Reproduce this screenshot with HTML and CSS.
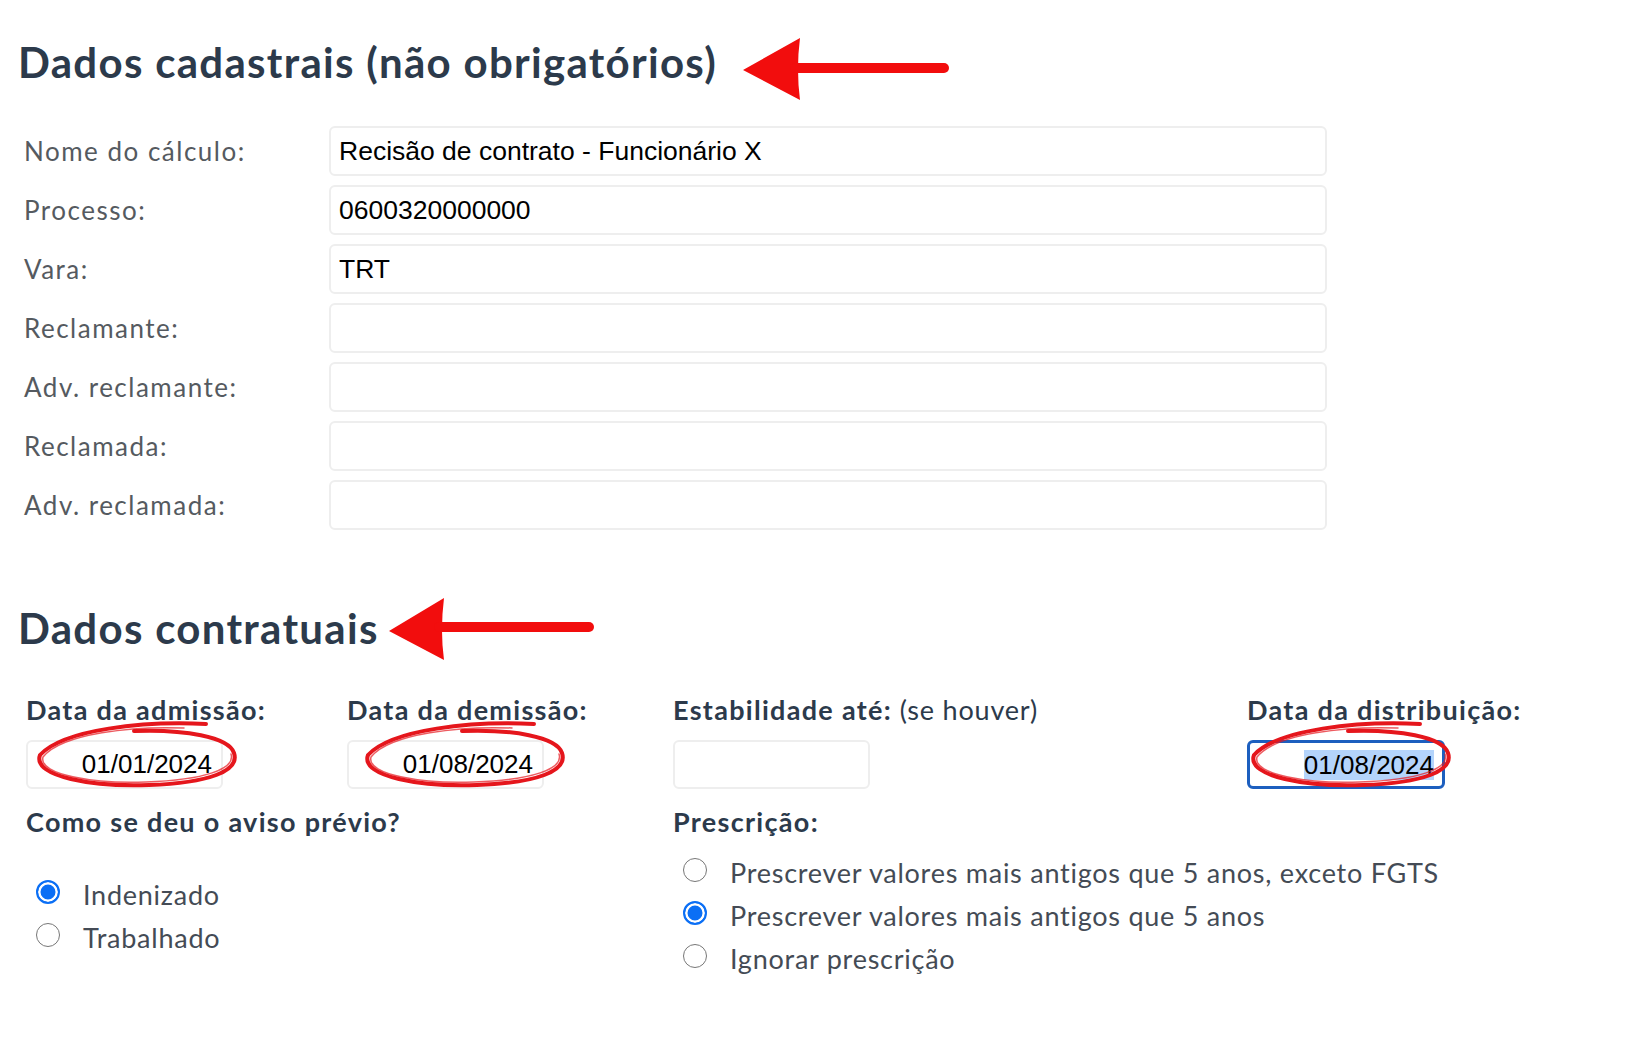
FILE: index.html
```html
<!DOCTYPE html>
<html lang="pt-BR">
<head>
<meta charset="utf-8">
<title>Dados do cálculo</title>
<link rel="stylesheet" href="styles.css">
</head>
<body>
<main class="page">
  <section class="block">
    <div class="title-row">
      <h2 class="title">Dados cadastrais (não obrigatórios)</h2>
      <svg class="arrow arrow--one" width="210" height="64" viewBox="0 0 210 64" aria-hidden="true">
        <path d="M0 33 L57 1 Q53 32 57 63 Z" fill="#f20d0d"/>
        <path d="M52 31 L201 31" stroke="#f20d0d" stroke-width="10" stroke-linecap="round" fill="none"/>
      </svg>
    </div>
    <div class="fields">
      <label class="field-label" for="f-nome">Nome do cálculo:</label>
      <input class="text-input" id="f-nome" type="text" value="Recisão de contrato - Funcionário X">
      <label class="field-label" for="f-processo">Processo:</label>
      <input class="text-input" id="f-processo" type="text" value="0600320000000">
      <label class="field-label" for="f-vara">Vara:</label>
      <input class="text-input" id="f-vara" type="text" value="TRT">
      <label class="field-label" for="f-reclamante">Reclamante:</label>
      <input class="text-input" id="f-reclamante" type="text" value="">
      <label class="field-label" for="f-adv-reclamante">Adv. reclamante:</label>
      <input class="text-input" id="f-adv-reclamante" type="text" value="">
      <label class="field-label" for="f-reclamada">Reclamada:</label>
      <input class="text-input" id="f-reclamada" type="text" value="">
      <label class="field-label" for="f-adv-reclamada">Adv. reclamada:</label>
      <input class="text-input" id="f-adv-reclamada" type="text" value="">
    </div>
  </section>

  <section class="block block--contract">
    <div class="title-row">
      <h2 class="title">Dados contratuais</h2>
      <svg class="arrow arrow--two" width="210" height="64" viewBox="0 0 210 64" aria-hidden="true">
        <path d="M0 33 L55 0 Q51 32 55 62 Z" fill="#f20d0d"/>
        <path d="M50 29 L200 29" stroke="#f20d0d" stroke-width="10" stroke-linecap="round" fill="none"/>
      </svg>
    </div>

    <div class="contract">
      <div class="date-field">
        <label class="strong-label" for="d-admissao">Data da admissão:</label>
        <input class="date-input" id="d-admissao" type="text" value="01/01/2024">
        <svg class="mark mark--one" width="212" height="72" viewBox="0 0 212 72" aria-hidden="true">
          <path class="mark-main" d="M172 5 C110 2 30 10 6 36 C-2 58 60 68 115 66 C175 64 206 52 200 34 C195 18 150 10 100 12"/>
          <path class="mark-thin" d="M150 9 C100 7 28 14 9 38 C4 56 62 65 112 63 C170 61 202 50 197 35"/>
        </svg>
      </div>
      <div class="date-field">
        <label class="strong-label" for="d-demissao">Data da demissão:</label>
        <input class="date-input" id="d-demissao" type="text" value="01/08/2024">
        <svg class="mark mark--two" width="212" height="72" viewBox="0 0 212 72" aria-hidden="true">
          <path class="mark-main" d="M172 5 C110 2 30 10 6 36 C-2 58 60 68 115 66 C175 64 206 52 200 34 C195 18 150 10 100 12"/>
          <path class="mark-thin" d="M150 9 C100 7 28 14 9 38 C4 56 62 65 112 63 C170 61 202 50 197 35"/>
        </svg>
      </div>
      <div class="date-field">
        <label class="strong-label" for="d-estabilidade">Estabilidade até: <span class="hint">(se houver)</span></label>
        <input class="date-input" id="d-estabilidade" type="text" value="">
      </div>
      <div class="date-field">
        <span class="strong-label">Data da distribuição:</span>
        <div class="date-input date-input--focused" role="textbox"><span class="selected-text">01/08/2024</span></div>
        <svg class="mark mark--three" width="212" height="72" viewBox="0 0 212 72" aria-hidden="true">
          <path class="mark-main" d="M172 5 C110 2 30 10 6 36 C-2 58 60 68 115 66 C175 64 206 52 200 34 C195 18 150 10 100 12"/>
          <path class="mark-thin" d="M150 9 C100 7 28 14 9 38 C4 56 62 65 112 63 C170 61 202 50 197 35"/>
        </svg>
      </div>

      <div class="choice choice--wide">
        <span class="strong-label">Como se deu o aviso prévio?</span>
        <div class="options options--spaced">
          <label class="option"><input class="radio" type="radio" name="aviso" checked><span>Indenizado</span></label>
          <label class="option"><input class="radio" type="radio" name="aviso"><span>Trabalhado</span></label>
        </div>
      </div>
      <div class="choice choice--wide">
        <span class="strong-label">Prescrição:</span>
        <div class="options">
          <label class="option"><input class="radio" type="radio" name="prescricao"><span>Prescrever valores mais antigos que 5 anos, exceto FGTS</span></label>
          <label class="option"><input class="radio" type="radio" name="prescricao" checked><span>Prescrever valores mais antigos que 5 anos</span></label>
          <label class="option"><input class="radio" type="radio" name="prescricao"><span>Ignorar prescrição</span></label>
        </div>
      </div>
    </div>
  </section>
</main>
</body>
</html>
```

FILE: styles.css
```css
html, body {
  margin: 0;
  background: #ffffff;
}

body {
  font-family: Lato, "Open Sans", sans-serif;
  color: #2c3a4b;
}

.page {
  padding: 38px 0 0 16px;
}

.title-row {
  display: flex;
  align-items: flex-start;
}

.title {
  margin: 0 0 0 2px;
  font-size: 42px;
  line-height: 48px;
  font-weight: 700;
  color: #2c3a4b;
  letter-spacing: 1.3px;
  white-space: nowrap;
}

.arrow {
  flex: none;
  display: block;
}

.arrow--one {
  margin: -1px 0 0 26px;
}

.arrow--two {
  margin: -6px 0 0 10px;
}

.fields {
  display: grid;
  grid-template-columns: 305px 998px;
  row-gap: 9px;
  align-items: center;
  margin: 25px 0 0 8px;
}

.field-label {
  font-size: 26px;
  line-height: 30px;
  color: #555a60;
  letter-spacing: 1.5px;
}

.text-input {
  display: block;
  width: 100%;
  height: 50px;
  box-sizing: border-box;
  margin: 0;
  padding: 0 8px;
  border: 2px solid #eeeeee;
  border-radius: 6px;
  background: #ffffff;
  font-family: "Liberation Sans", Arial, sans-serif;
  font-size: 26.5px;
  color: #000000;
  outline: none;
}

.block--contract .title-row {
  margin-top: 74px;
}

.contract {
  display: grid;
  grid-template-columns: 321px 326px 574px 220px;
  row-gap: 18px;
  margin: 33px 0 0 10px;
}

.date-field {
  position: relative;
  display: flex;
  flex-direction: column;
  align-items: flex-start;
  gap: 15px;
}

.strong-label {
  font-size: 27px;
  line-height: 30px;
  font-weight: 700;
  color: #2c3a4b;
  letter-spacing: 1.3px;
  white-space: nowrap;
}

.hint {
  font-weight: 400;
  letter-spacing: 0.8px;
}

.date-input {
  display: block;
  width: 197px;
  height: 49px;
  box-sizing: border-box;
  margin: 0;
  padding: 0 9px;
  border: 2px solid #eeeeee;
  border-radius: 6px;
  background: #ffffff;
  font-family: "Liberation Sans", Arial, sans-serif;
  font-size: 26px;
  color: #000000;
  text-align: right;
  outline: none;
}

.date-input--focused {
  width: 198px;
  display: flex;
  align-items: center;
  justify-content: flex-end;
  padding: 0 8px;
  border: 3px solid #1d5fbf;
  border-radius: 6px;
}

.selected-text {
  background: #b4d4fb;
  line-height: 30px;
}

.mark {
  position: absolute;
  top: 24px;
  pointer-events: none;
  overflow: visible;
}

.mark--one {
  left: 8px;
}

.mark--two {
  left: 15px;
}

.mark--three {
  left: 1px;
}

.mark-main {
  fill: none;
  stroke: #e5161c;
  stroke-width: 4;
  stroke-linecap: round;
}

.mark-thin {
  fill: none;
  stroke: #e5161c;
  stroke-width: 1.5;
  stroke-linecap: round;
  opacity: 0.7;
}

.choice--wide {
  grid-column: span 2;
  display: flex;
  flex-direction: column;
  align-items: flex-start;
}

.options {
  display: flex;
  flex-direction: column;
  margin-top: 14px;
}

.options--spaced {
  margin-top: 36px;
}

.option {
  display: flex;
  align-items: center;
  gap: 23px;
  height: 43px;
  padding-left: 10px;
  font-size: 27px;
  color: #444b55;
  letter-spacing: 0.75px;
  white-space: nowrap;
}

.radio {
  appearance: none;
  -webkit-appearance: none;
  flex: none;
  width: 24px;
  height: 24px;
  box-sizing: border-box;
  margin: 0 0 5px 0;
  border: 1.5px solid #777777;
  border-radius: 50%;
  background: #ffffff;
}

.radio:checked {
  border: 2px solid #0b6ff5;
  background: #0b6ff5;
  box-shadow: inset 0 0 0 2.5px #ffffff;
}
```
